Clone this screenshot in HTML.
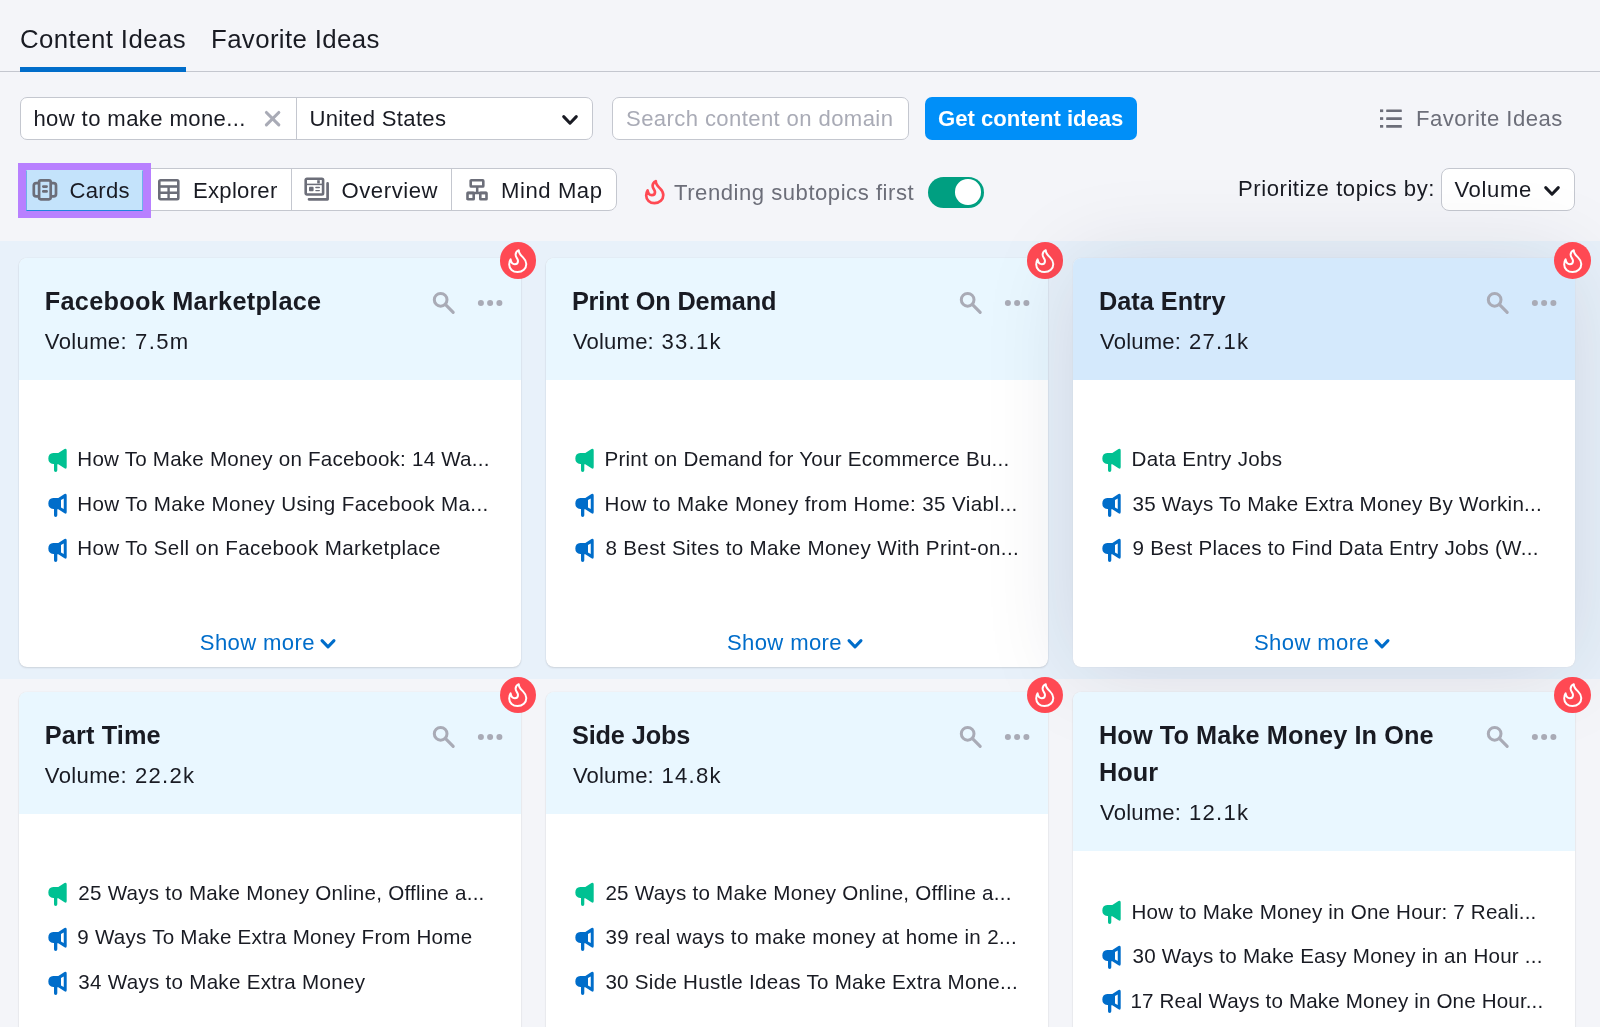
<!DOCTYPE html>
<html lang="en">
<head>
<meta charset="utf-8">
<title>Content Ideas</title>
<style>
*{box-sizing:border-box;margin:0;padding:0}
html,body{width:1600px;height:1027px;overflow:hidden}
body{background:#f4f5f9;font-family:"Liberation Sans",Arial,sans-serif;color:#191b23;position:relative;will-change:transform}
.abs{position:absolute}
.t{position:absolute;white-space:nowrap;line-height:1}
/* tabs */
.tab{top:27px;color:#191b23}
.tabline{position:absolute;left:0;top:71px;width:1600px;height:1px;background:#c4c7cf}
.tabactive{position:absolute;left:20px;top:67px;width:166px;height:5px;background:#006dca}
/* inputs */
.box{position:absolute;background:#fff;border:1px solid #c4c7cf;border-radius:7px}
.btn{position:absolute;left:925px;top:97px;width:212px;height:43px;background:#008ff8;border-radius:7px}
/* cards */
.band{position:absolute;left:0;top:241.2px;width:1600px;height:438px;background:#e8f1fa}
.card{position:absolute;width:502.4px;background:#fff;border-radius:8px;box-shadow:0 0 1px rgba(25,27,35,.16),0 1px 2px rgba(25,27,35,.12)}
.card .hd{position:absolute;left:0;top:0;width:100%;background:#e9f7ff;border-radius:8px 8px 0 0}
.card.hover{box-shadow:0 0 1px rgba(25,27,35,.16),0 4px 90px rgba(20,35,60,.125)}
.card.hover .hd{background:#d4e9fc}
.title{font-weight:bold;left:26px;color:#191b23}
.vol{left:26px;color:#191b23}
.item{left:58.5px;color:#191b23}
.more{color:#006dca}
.tab{font-size:25.8px}
.title{font-size:25.3px}
.f14,.vol,.more{font-size:22.1px}
.item{font-size:20.6px}
#tb1{letter-spacing:0.417px;margin-left:0.00px;margin-top:0.00px}
#tb2{letter-spacing:0.385px;margin-left:0.00px;margin-top:0.00px}
#q{letter-spacing:0.389px;margin-left:0.00px;margin-top:0.00px}
#us{letter-spacing:0.333px;margin-left:0.00px;margin-top:0.00px}
#sd{letter-spacing:0.391px;margin-left:0.00px;margin-top:0.00px}
#gb{letter-spacing:0.000px;margin-left:0.00px;margin-top:0.00px}
#fi{letter-spacing:0.492px;margin-left:0.60px;margin-top:0.00px}
#v1{letter-spacing:0.250px;margin-left:0.00px;margin-top:0.00px}
#v2{letter-spacing:0.286px;margin-left:0.00px;margin-top:0.00px}
#v3{letter-spacing:0.571px;margin-left:0.00px;margin-top:0.00px}
#v4{letter-spacing:0.571px;margin-left:0.00px;margin-top:0.00px}
#tr{letter-spacing:0.522px;margin-left:1.00px;margin-top:0.00px}
#pr{letter-spacing:0.550px;margin-left:0.00px;margin-top:0.00px}
#vo{letter-spacing:0.600px;margin-left:0.00px;margin-top:0.00px}
#c0t0{letter-spacing:0.263px;margin-left:0.00px;margin-top:0.00px}
#c0v{letter-spacing:0.333px;margin-left:0.00px;margin-top:0.00px}
#c0n{letter-spacing:1.333px;margin-left:1.00px;margin-top:0.00px}
#c0i0{letter-spacing:0.211px;margin-left:0.00px;margin-top:0.00px}
#c0i1{letter-spacing:0.351px;margin-left:0.00px;margin-top:0.00px}
#c0i2{letter-spacing:0.353px;margin-left:0.00px;margin-top:0.00px}
#c0m{letter-spacing:0.375px;margin-left:0.00px;margin-top:0.00px}
#c1t0{letter-spacing:-0.143px;margin-left:0.00px;margin-top:0.00px}
#c1v{letter-spacing:0.167px;margin-left:1.00px;margin-top:0.00px}
#c1n{letter-spacing:1.250px;margin-left:0.40px;margin-top:0.00px}
#c1i0{letter-spacing:0.256px;margin-left:0.00px;margin-top:0.00px}
#c1i1{letter-spacing:0.385px;margin-left:0.00px;margin-top:0.00px}
#c1i2{letter-spacing:0.357px;margin-left:1.00px;margin-top:0.00px}
#c1m{letter-spacing:0.375px;margin-left:0.00px;margin-top:0.00px}
#c2t0{letter-spacing:0.000px;margin-left:0.00px;margin-top:0.00px}
#c2v{letter-spacing:0.167px;margin-left:1.00px;margin-top:0.00px}
#c2n{letter-spacing:1.250px;margin-left:0.80px;margin-top:0.00px}
#c2i0{letter-spacing:0.286px;margin-left:0.00px;margin-top:0.00px}
#c2i1{letter-spacing:0.231px;margin-left:1.00px;margin-top:0.00px}
#c2i2{letter-spacing:0.262px;margin-left:1.00px;margin-top:0.00px}
#c2m{letter-spacing:0.375px;margin-left:0.00px;margin-top:0.00px}
#c3t0{letter-spacing:0.125px;margin-left:0.00px;margin-top:0.00px}
#c3v{letter-spacing:0.333px;margin-left:0.00px;margin-top:0.00px}
#c3n{letter-spacing:1.250px;margin-left:1.00px;margin-top:0.00px}
#c3i0{letter-spacing:0.244px;margin-left:1.00px;margin-top:0.00px}
#c3i1{letter-spacing:0.229px;margin-left:0.00px;margin-top:0.00px}
#c3i2{letter-spacing:0.269px;margin-left:1.00px;margin-top:0.00px}
#c4t0{letter-spacing:-0.125px;margin-left:0.00px;margin-top:0.00px}
#c4v{letter-spacing:0.167px;margin-left:1.00px;margin-top:0.00px}
#c4n{letter-spacing:1.250px;margin-left:0.40px;margin-top:0.00px}
#c4i0{letter-spacing:0.244px;margin-left:1.00px;margin-top:0.00px}
#c4i1{letter-spacing:0.317px;margin-left:1.00px;margin-top:0.00px}
#c4i2{letter-spacing:0.268px;margin-left:1.00px;margin-top:0.00px}
#c5t0{letter-spacing:0.087px;margin-left:0.00px;margin-top:0.00px}
#c5t1{letter-spacing:0.000px;margin-left:0.00px;margin-top:0.00px}
#c5v{letter-spacing:0.167px;margin-left:1.00px;margin-top:0.00px}
#c5n{letter-spacing:1.250px;margin-left:0.80px;margin-top:0.00px}
#c5i0{letter-spacing:0.190px;margin-left:0.00px;margin-top:0.00px}
#c5i1{letter-spacing:0.225px;margin-left:1.00px;margin-top:0.00px}
#c5i2{letter-spacing:0.150px;margin-left:-1.00px;margin-top:0.00px}
.fire{position:absolute;width:36.6px;height:36.6px;border-radius:50%;background:#ff4953}
</style>
</head>
<body>
<!-- TABS -->
<div class="t tab" id="tb1" style="left:20px">Content Ideas</div>
<div class="t tab" id="tb2" style="left:211px">Favorite Ideas</div>
<div class="tabline"></div>
<div class="tabactive"></div>
<!-- SEARCH ROW -->
<div class="box" style="left:20px;top:97px;width:573px;height:43px"></div>
<div class="abs" style="left:296px;top:98px;width:1px;height:41px;background:#c4c7cf"></div>
<div class="t f14" id="q" style="left:33.4px;top:107.9px;">how to make mone...</div>
<svg class="abs" style="left:264px;top:110px" width="18" height="18" viewBox="0 0 18 18"><path d="M2.4 2.5 L14.8 14.9 M14.8 2.5 L2.4 14.9" stroke="#a9abb6" stroke-width="3.1" stroke-linecap="round" fill="none"/></svg>
<div class="t f14" id="us" style="left:309.4px;top:107.9px;">United States</div>
<svg class="abs" style="left:561px;top:113px" width="18" height="13" viewBox="0 0 18 13"><path d="M2.7 3.6 L9 10.2 L15.3 3.6" stroke="#191b23" stroke-width="3" fill="none" stroke-linecap="round" stroke-linejoin="round"/></svg>
<div class="box" style="left:612px;top:97px;width:297px;height:43px"></div>
<div class="t f14" id="sd" style="left:626px;top:107.9px;color:#a9abb6">Search content on domain</div>
<div class="btn"></div>
<div class="t f14" id="gb" style="left:938px;top:107.9px;color:#fff;font-weight:bold">Get content ideas</div>
<svg class="abs" style="left:1379px;top:108px" width="24" height="22" viewBox="0 0 24 22"><g fill="#6c6e79"><rect x="1" y="1.4" width="3.2" height="2.7"/><rect x="1" y="9.2" width="3.2" height="2.7"/><rect x="1" y="17" width="3.2" height="2.7"/><rect x="7.2" y="1.4" width="15.6" height="2.7" rx=".5"/><rect x="7.2" y="9.2" width="15.6" height="2.7" rx=".5"/><rect x="7.2" y="17" width="15.6" height="2.7" rx=".5"/></g></svg>
<div class="t f14" id="fi" style="left:1415.4px;top:107.9px;color:#6c6e79">Favorite Ideas</div>
<!-- VIEW ROW -->
<div class="box" style="left:20px;top:168px;width:597px;height:43px;border-radius:8px"></div>
<div class="abs" style="left:18px;top:163px;width:133px;height:55px;background:#b880ff"></div>
<div class="abs" style="left:26px;top:170px;width:117px;height:41px;background:#c4e3fb;border:1px solid #6fb1ea;border-bottom-color:#1f83dc;border-top-color:#c4e3fb"></div>
<div class="abs" style="left:291px;top:169px;width:1px;height:41px;background:#c4c7cf"></div>
<div class="abs" style="left:451px;top:169px;width:1px;height:41px;background:#c4c7cf"></div>
<!-- cards icon -->
<svg class="abs" style="left:32px;top:178px" width="26" height="24" viewBox="0 0 26 24"><g fill="none" stroke="#6c6e79" stroke-width="2.7" stroke-linejoin="round"><rect x="7.1" y="2.3" width="11.6" height="19" rx="1.7"/><path d="M7 5.2 H4.2 Q1.8 5.2 1.8 7.6 V16 Q1.8 18.4 4.2 18.4 H7"/><path d="M18.8 5.2 H21.6 Q24 5.2 24 7.6 V16 Q24 18.4 21.6 18.4 H18.8"/><path d="M11.3 8.6 H14.6 M11.3 13.4 H14.6" stroke-linecap="round" stroke-width="2.7"/></g></svg>
<div class="t f14" id="v1" style="left:69.6px;top:179.75px;">Cards</div>
<!-- explorer icon -->
<svg class="abs" style="left:157px;top:178px" width="24" height="24" viewBox="0 0 24 24"><g fill="none" stroke="#6c6e79" stroke-width="2.6" stroke-linejoin="round"><rect x="2.3" y="2.3" width="19" height="19" rx="1.2"/><path d="M2.3 8.5 H21.3"/><path d="M2.3 14.7 H21.3 M11.6 8.5 V21.3" stroke-width="2.4"/></g></svg>
<div class="t f14" id="v2" style="left:193px;top:179.75px;">Explorer</div>
<!-- overview icon -->
<svg class="abs" style="left:304px;top:177px" width="26" height="25" viewBox="0 0 26 25"><g fill="none" stroke="#6c6e79"><rect x="1.7" y="1.7" width="17.4" height="15.8" rx="1.2" stroke-width="2.6"/><path d="M1.7 7.4 H19.1" stroke-width="1.5"/><path d="M5 22.3 H23.6 V6.4" stroke-width="2.7" stroke-linejoin="round" stroke-linecap="round"/><path d="M11.9 10.5 H15.3 M11.9 13.6 H15.3" stroke-width="1.4" stroke-linecap="round"/></g><rect x="5" y="9.8" width="4.6" height="4.4" rx=".9" fill="#6c6e79"/><rect x="13.2" y="3.2" width="2.6" height="3.2" fill="#6c6e79"/></svg>
<div class="t f14" id="v3" style="left:341.5px;top:179.75px;">Overview</div>
<!-- mindmap icon -->
<svg class="abs" style="left:465px;top:178px" width="24" height="24" viewBox="0 0 24 24"><g fill="none" stroke="#6c6e79" stroke-width="2.6" stroke-linejoin="round"><rect x="5.7" y="2.3" width="12.6" height="6.2" rx=".6"/><rect x="2.5" y="14.9" width="6.2" height="6.4" rx=".4"/><rect x="15.3" y="14.9" width="6.2" height="6.4" rx=".4"/><path d="M12.2 8.5 V14.9 M2.5 14.9 H21.5" stroke-width="2.5"/></g></svg>
<div class="t f14" id="v4" style="left:501px;top:179.75px;">Mind Map</div>
<!-- trending -->
<svg class="abs" style="left:643px;top:178px" width="24" height="28" viewBox="0 0 24 28"><path d="M12.8 3.2 C12.6 6.4 15.2 8.6 17 10.4 C19 12.4 20.3 14.4 20.3 17 C20.3 21.6 16.6 25.1 11.5 25.1 C6.8 25.1 3.2 21.8 3.2 17.4 C3.2 15.4 3.8 13.6 4.6 12.4 C5 15 6.4 17.2 8.8 17.2 C10.8 17.2 12 15.8 12 14 C12 11.6 9.6 10.6 9.6 7.8 C9.6 5.8 10.8 4.2 12.8 3.2 Z" fill="none" stroke="#ff4953" stroke-width="2.7" stroke-linejoin="round"/></svg>
<div class="t f14" id="tr" style="left:673px;top:181.8px;color:#6c6e79">Trending subtopics first</div>
<div class="abs" style="left:927.75px;top:176.75px;width:55.75px;height:31px;border-radius:16px;background:#009f81"></div>
<div class="abs" style="left:955.3px;top:179.4px;width:25.4px;height:25.4px;border-radius:50%;background:#fff"></div>
<div class="t f14" id="pr" style="left:1238px;top:177.5px;">Prioritize topics by:</div>
<div class="box" style="left:1441px;top:168px;width:134px;height:43px;border-radius:8px"></div>
<div class="t f14" id="vo" style="left:1454.5px;top:178.5px;">Volume</div>
<svg class="abs" style="left:1543.25px;top:184.4px" width="18" height="13" viewBox="0 0 18 13"><path d="M2.7 3.6 L9 10.2 L15.3 3.6" stroke="#191b23" stroke-width="3" fill="none" stroke-linecap="round" stroke-linejoin="round"/></svg>
<!-- CARDS -->
<div class="band"></div>
<!-- CARDS-BEGIN -->
<div class="card" style="left:18.8px;top:257.6px;height:409.3px">
<div class="hd" style="height:122px"></div>
<div class="t title" id="c0t0" style="top:31.3px">Facebook Marketplace</div>
<div class="t vol" id="c0v" style="top:73.2px">Volume:</div>
<div class="t vol" id="c0n" style="top:73.2px;left:115.25px">7.5m</div>
<svg class="abs" style="left:413px;top:33px" width="24" height="24" viewBox="0 0 24 24"><circle cx="8.65" cy="8.8" r="6.35" fill="none" stroke="#a9abb6" stroke-width="3"/><path d="M13.3 13.4 L21.2 21.4" stroke="#a9abb6" stroke-width="3.1" stroke-linecap="round"/></svg>
<svg class="abs" style="left:458px;top:41px" width="26" height="8" viewBox="0 0 26 8"><circle cx="3.9" cy="4" r="3" fill="#a9abb6"/><circle cx="13.1" cy="4" r="3" fill="#a9abb6"/><circle cx="22.4" cy="4" r="3" fill="#a9abb6"/></svg>
<svg class="abs" style="left:28px;top:190.4px" width="21" height="25" viewBox="0 0 21 25"><path fill="#00c192" d="M6.25 5.1 H11.3 L17.5 1.1 Q19.7 -0.1 19.7 2.4 V19 Q19.7 21.5 17.5 20.3 L11.3 16.2 H10.3 V22.25 A1.65 1.65 0 0 1 7 22.25 V15.95 H6.25 A5.45 5.45 0 0 1 6.25 5.1 Z"/></svg>
<div class="t item" id="c0i0" style="top:191.9px">How To Make Money on Facebook: 14 Wa...</div>
<svg class="abs" style="left:28px;top:235.2px" width="21" height="25" viewBox="0 0 21 25"><path fill="#006dca" fill-rule="evenodd" d="M6.25 5.1 H11.3 L17.5 1.1 Q19.7 -0.1 19.7 2.4 V19 Q19.7 21.5 17.5 20.3 L11.3 16.2 H10.3 V22.25 A1.65 1.65 0 0 1 7 22.25 V15.95 H6.25 A5.45 5.45 0 0 1 6.25 5.1 Z M14 7 L16.75 5.5 V15.9 L14 14.4 Z"/></svg>
<div class="t item" id="c0i1" style="top:236.3px">How To Make Money Using Facebook Ma...</div>
<svg class="abs" style="left:28px;top:280.1px" width="21" height="25" viewBox="0 0 21 25"><path fill="#006dca" fill-rule="evenodd" d="M6.25 5.1 H11.3 L17.5 1.1 Q19.7 -0.1 19.7 2.4 V19 Q19.7 21.5 17.5 20.3 L11.3 16.2 H10.3 V22.25 A1.65 1.65 0 0 1 7 22.25 V15.95 H6.25 A5.45 5.45 0 0 1 6.25 5.1 Z M14 7 L16.75 5.5 V15.9 L14 14.4 Z"/></svg>
<div class="t item" id="c0i2" style="top:280.9px">How To Sell on Facebook Marketplace</div>
<div class="t more" id="c0m" style="left:181px;top:374.4px">Show more</div>
<svg class="abs" style="left:299.8px;top:379.4px" width="18" height="13" viewBox="0 0 18 13"><path d="M3 3.6 L9 9.9 L15 3.6" stroke="#006dca" stroke-width="3" fill="none" stroke-linecap="round" stroke-linejoin="round"/></svg>
<div class="fire" style="left:480.95px;top:-15.2px"><svg class="abs" style="left:6.6px;top:4.1px" width="24" height="28" viewBox="0 0 24 28"><path d="M12.8 3.2 C12.6 6.4 15.2 8.6 17 10.4 C19 12.4 20.3 14.4 20.3 17 C20.3 21.6 16.6 25.1 11.5 25.1 C6.8 25.1 3.2 21.8 3.2 17.4 C3.2 15.4 3.8 13.6 4.6 12.4 C5 15 6.4 17.2 8.8 17.2 C10.8 17.2 12 15.8 12 14 C12 11.6 9.6 10.6 9.6 7.8 C9.6 5.8 10.8 4.2 12.8 3.2 Z" fill="none" stroke="#fff" stroke-width="2" stroke-linejoin="round"/></svg></div>
</div>
<div class="card" style="left:545.9px;top:257.6px;height:409.3px">
<div class="hd" style="height:122px"></div>
<div class="t title" id="c1t0" style="top:31.3px">Print On Demand</div>
<div class="t vol" id="c1v" style="top:73.2px">Volume:</div>
<div class="t vol" id="c1n" style="top:73.2px;left:115.25px">33.1k</div>
<svg class="abs" style="left:413px;top:33px" width="24" height="24" viewBox="0 0 24 24"><circle cx="8.65" cy="8.8" r="6.35" fill="none" stroke="#a9abb6" stroke-width="3"/><path d="M13.3 13.4 L21.2 21.4" stroke="#a9abb6" stroke-width="3.1" stroke-linecap="round"/></svg>
<svg class="abs" style="left:458px;top:41px" width="26" height="8" viewBox="0 0 26 8"><circle cx="3.9" cy="4" r="3" fill="#a9abb6"/><circle cx="13.1" cy="4" r="3" fill="#a9abb6"/><circle cx="22.4" cy="4" r="3" fill="#a9abb6"/></svg>
<svg class="abs" style="left:28px;top:190.4px" width="21" height="25" viewBox="0 0 21 25"><path fill="#00c192" d="M6.25 5.1 H11.3 L17.5 1.1 Q19.7 -0.1 19.7 2.4 V19 Q19.7 21.5 17.5 20.3 L11.3 16.2 H10.3 V22.25 A1.65 1.65 0 0 1 7 22.25 V15.95 H6.25 A5.45 5.45 0 0 1 6.25 5.1 Z"/></svg>
<div class="t item" id="c1i0" style="top:191.9px">Print on Demand for Your Ecommerce Bu...</div>
<svg class="abs" style="left:28px;top:235.2px" width="21" height="25" viewBox="0 0 21 25"><path fill="#006dca" fill-rule="evenodd" d="M6.25 5.1 H11.3 L17.5 1.1 Q19.7 -0.1 19.7 2.4 V19 Q19.7 21.5 17.5 20.3 L11.3 16.2 H10.3 V22.25 A1.65 1.65 0 0 1 7 22.25 V15.95 H6.25 A5.45 5.45 0 0 1 6.25 5.1 Z M14 7 L16.75 5.5 V15.9 L14 14.4 Z"/></svg>
<div class="t item" id="c1i1" style="top:236.3px">How to Make Money from Home: 35 Viabl...</div>
<svg class="abs" style="left:28px;top:280.1px" width="21" height="25" viewBox="0 0 21 25"><path fill="#006dca" fill-rule="evenodd" d="M6.25 5.1 H11.3 L17.5 1.1 Q19.7 -0.1 19.7 2.4 V19 Q19.7 21.5 17.5 20.3 L11.3 16.2 H10.3 V22.25 A1.65 1.65 0 0 1 7 22.25 V15.95 H6.25 A5.45 5.45 0 0 1 6.25 5.1 Z M14 7 L16.75 5.5 V15.9 L14 14.4 Z"/></svg>
<div class="t item" id="c1i2" style="top:280.9px">8 Best Sites to Make Money With Print-on...</div>
<div class="t more" id="c1m" style="left:181px;top:374.4px">Show more</div>
<svg class="abs" style="left:299.8px;top:379.4px" width="18" height="13" viewBox="0 0 18 13"><path d="M3 3.6 L9 9.9 L15 3.6" stroke="#006dca" stroke-width="3" fill="none" stroke-linecap="round" stroke-linejoin="round"/></svg>
<div class="fire" style="left:480.95px;top:-15.2px"><svg class="abs" style="left:6.6px;top:4.1px" width="24" height="28" viewBox="0 0 24 28"><path d="M12.8 3.2 C12.6 6.4 15.2 8.6 17 10.4 C19 12.4 20.3 14.4 20.3 17 C20.3 21.6 16.6 25.1 11.5 25.1 C6.8 25.1 3.2 21.8 3.2 17.4 C3.2 15.4 3.8 13.6 4.6 12.4 C5 15 6.4 17.2 8.8 17.2 C10.8 17.2 12 15.8 12 14 C12 11.6 9.6 10.6 9.6 7.8 C9.6 5.8 10.8 4.2 12.8 3.2 Z" fill="none" stroke="#fff" stroke-width="2" stroke-linejoin="round"/></svg></div>
</div>
<div class="card hover" style="left:1073px;top:257.6px;height:409.3px">
<div class="hd" style="height:122px"></div>
<div class="t title" id="c2t0" style="top:31.3px">Data Entry</div>
<div class="t vol" id="c2v" style="top:73.2px">Volume:</div>
<div class="t vol" id="c2n" style="top:73.2px;left:115.25px">27.1k</div>
<svg class="abs" style="left:413px;top:33px" width="24" height="24" viewBox="0 0 24 24"><circle cx="8.65" cy="8.8" r="6.35" fill="none" stroke="#a9abb6" stroke-width="3"/><path d="M13.3 13.4 L21.2 21.4" stroke="#a9abb6" stroke-width="3.1" stroke-linecap="round"/></svg>
<svg class="abs" style="left:458px;top:41px" width="26" height="8" viewBox="0 0 26 8"><circle cx="3.9" cy="4" r="3" fill="#a9abb6"/><circle cx="13.1" cy="4" r="3" fill="#a9abb6"/><circle cx="22.4" cy="4" r="3" fill="#a9abb6"/></svg>
<svg class="abs" style="left:28px;top:190.4px" width="21" height="25" viewBox="0 0 21 25"><path fill="#00c192" d="M6.25 5.1 H11.3 L17.5 1.1 Q19.7 -0.1 19.7 2.4 V19 Q19.7 21.5 17.5 20.3 L11.3 16.2 H10.3 V22.25 A1.65 1.65 0 0 1 7 22.25 V15.95 H6.25 A5.45 5.45 0 0 1 6.25 5.1 Z"/></svg>
<div class="t item" id="c2i0" style="top:191.9px">Data Entry Jobs</div>
<svg class="abs" style="left:28px;top:235.2px" width="21" height="25" viewBox="0 0 21 25"><path fill="#006dca" fill-rule="evenodd" d="M6.25 5.1 H11.3 L17.5 1.1 Q19.7 -0.1 19.7 2.4 V19 Q19.7 21.5 17.5 20.3 L11.3 16.2 H10.3 V22.25 A1.65 1.65 0 0 1 7 22.25 V15.95 H6.25 A5.45 5.45 0 0 1 6.25 5.1 Z M14 7 L16.75 5.5 V15.9 L14 14.4 Z"/></svg>
<div class="t item" id="c2i1" style="top:236.3px">35 Ways To Make Extra Money By Workin...</div>
<svg class="abs" style="left:28px;top:280.1px" width="21" height="25" viewBox="0 0 21 25"><path fill="#006dca" fill-rule="evenodd" d="M6.25 5.1 H11.3 L17.5 1.1 Q19.7 -0.1 19.7 2.4 V19 Q19.7 21.5 17.5 20.3 L11.3 16.2 H10.3 V22.25 A1.65 1.65 0 0 1 7 22.25 V15.95 H6.25 A5.45 5.45 0 0 1 6.25 5.1 Z M14 7 L16.75 5.5 V15.9 L14 14.4 Z"/></svg>
<div class="t item" id="c2i2" style="top:280.9px">9 Best Places to Find Data Entry Jobs (W...</div>
<div class="t more" id="c2m" style="left:181px;top:374.4px">Show more</div>
<svg class="abs" style="left:299.8px;top:379.4px" width="18" height="13" viewBox="0 0 18 13"><path d="M3 3.6 L9 9.9 L15 3.6" stroke="#006dca" stroke-width="3" fill="none" stroke-linecap="round" stroke-linejoin="round"/></svg>
<div class="fire" style="left:480.95px;top:-15.2px"><svg class="abs" style="left:6.6px;top:4.1px" width="24" height="28" viewBox="0 0 24 28"><path d="M12.8 3.2 C12.6 6.4 15.2 8.6 17 10.4 C19 12.4 20.3 14.4 20.3 17 C20.3 21.6 16.6 25.1 11.5 25.1 C6.8 25.1 3.2 21.8 3.2 17.4 C3.2 15.4 3.8 13.6 4.6 12.4 C5 15 6.4 17.2 8.8 17.2 C10.8 17.2 12 15.8 12 14 C12 11.6 9.6 10.6 9.6 7.8 C9.6 5.8 10.8 4.2 12.8 3.2 Z" fill="none" stroke="#fff" stroke-width="2" stroke-linejoin="round"/></svg></div>
</div>
<div class="card" style="left:18.8px;top:691.9px;height:400px">
<div class="hd" style="height:122px"></div>
<div class="t title" id="c3t0" style="top:31.3px">Part Time</div>
<div class="t vol" id="c3v" style="top:73.2px">Volume:</div>
<div class="t vol" id="c3n" style="top:73.2px;left:115.25px">22.2k</div>
<svg class="abs" style="left:413px;top:33px" width="24" height="24" viewBox="0 0 24 24"><circle cx="8.65" cy="8.8" r="6.35" fill="none" stroke="#a9abb6" stroke-width="3"/><path d="M13.3 13.4 L21.2 21.4" stroke="#a9abb6" stroke-width="3.1" stroke-linecap="round"/></svg>
<svg class="abs" style="left:458px;top:41px" width="26" height="8" viewBox="0 0 26 8"><circle cx="3.9" cy="4" r="3" fill="#a9abb6"/><circle cx="13.1" cy="4" r="3" fill="#a9abb6"/><circle cx="22.4" cy="4" r="3" fill="#a9abb6"/></svg>
<svg class="abs" style="left:28px;top:190.4px" width="21" height="25" viewBox="0 0 21 25"><path fill="#00c192" d="M6.25 5.1 H11.3 L17.5 1.1 Q19.7 -0.1 19.7 2.4 V19 Q19.7 21.5 17.5 20.3 L11.3 16.2 H10.3 V22.25 A1.65 1.65 0 0 1 7 22.25 V15.95 H6.25 A5.45 5.45 0 0 1 6.25 5.1 Z"/></svg>
<div class="t item" id="c3i0" style="top:191.3px">25 Ways to Make Money Online, Offline a...</div>
<svg class="abs" style="left:28px;top:234.9px" width="21" height="25" viewBox="0 0 21 25"><path fill="#006dca" fill-rule="evenodd" d="M6.25 5.1 H11.3 L17.5 1.1 Q19.7 -0.1 19.7 2.4 V19 Q19.7 21.5 17.5 20.3 L11.3 16.2 H10.3 V22.25 A1.65 1.65 0 0 1 7 22.25 V15.95 H6.25 A5.45 5.45 0 0 1 6.25 5.1 Z M14 7 L16.75 5.5 V15.9 L14 14.4 Z"/></svg>
<div class="t item" id="c3i1" style="top:235.5px">9 Ways To Make Extra Money From Home</div>
<svg class="abs" style="left:28px;top:279.3px" width="21" height="25" viewBox="0 0 21 25"><path fill="#006dca" fill-rule="evenodd" d="M6.25 5.1 H11.3 L17.5 1.1 Q19.7 -0.1 19.7 2.4 V19 Q19.7 21.5 17.5 20.3 L11.3 16.2 H10.3 V22.25 A1.65 1.65 0 0 1 7 22.25 V15.95 H6.25 A5.45 5.45 0 0 1 6.25 5.1 Z M14 7 L16.75 5.5 V15.9 L14 14.4 Z"/></svg>
<div class="t item" id="c3i2" style="top:280.1px">34 Ways to Make Extra Money</div>
<div class="fire" style="left:480.95px;top:-15.2px"><svg class="abs" style="left:6.6px;top:4.1px" width="24" height="28" viewBox="0 0 24 28"><path d="M12.8 3.2 C12.6 6.4 15.2 8.6 17 10.4 C19 12.4 20.3 14.4 20.3 17 C20.3 21.6 16.6 25.1 11.5 25.1 C6.8 25.1 3.2 21.8 3.2 17.4 C3.2 15.4 3.8 13.6 4.6 12.4 C5 15 6.4 17.2 8.8 17.2 C10.8 17.2 12 15.8 12 14 C12 11.6 9.6 10.6 9.6 7.8 C9.6 5.8 10.8 4.2 12.8 3.2 Z" fill="none" stroke="#fff" stroke-width="2" stroke-linejoin="round"/></svg></div>
</div>
<div class="card" style="left:545.9px;top:691.9px;height:400px">
<div class="hd" style="height:122px"></div>
<div class="t title" id="c4t0" style="top:31.3px">Side Jobs</div>
<div class="t vol" id="c4v" style="top:73.2px">Volume:</div>
<div class="t vol" id="c4n" style="top:73.2px;left:115.25px">14.8k</div>
<svg class="abs" style="left:413px;top:33px" width="24" height="24" viewBox="0 0 24 24"><circle cx="8.65" cy="8.8" r="6.35" fill="none" stroke="#a9abb6" stroke-width="3"/><path d="M13.3 13.4 L21.2 21.4" stroke="#a9abb6" stroke-width="3.1" stroke-linecap="round"/></svg>
<svg class="abs" style="left:458px;top:41px" width="26" height="8" viewBox="0 0 26 8"><circle cx="3.9" cy="4" r="3" fill="#a9abb6"/><circle cx="13.1" cy="4" r="3" fill="#a9abb6"/><circle cx="22.4" cy="4" r="3" fill="#a9abb6"/></svg>
<svg class="abs" style="left:28px;top:190.4px" width="21" height="25" viewBox="0 0 21 25"><path fill="#00c192" d="M6.25 5.1 H11.3 L17.5 1.1 Q19.7 -0.1 19.7 2.4 V19 Q19.7 21.5 17.5 20.3 L11.3 16.2 H10.3 V22.25 A1.65 1.65 0 0 1 7 22.25 V15.95 H6.25 A5.45 5.45 0 0 1 6.25 5.1 Z"/></svg>
<div class="t item" id="c4i0" style="top:191.3px">25 Ways to Make Money Online, Offline a...</div>
<svg class="abs" style="left:28px;top:234.9px" width="21" height="25" viewBox="0 0 21 25"><path fill="#006dca" fill-rule="evenodd" d="M6.25 5.1 H11.3 L17.5 1.1 Q19.7 -0.1 19.7 2.4 V19 Q19.7 21.5 17.5 20.3 L11.3 16.2 H10.3 V22.25 A1.65 1.65 0 0 1 7 22.25 V15.95 H6.25 A5.45 5.45 0 0 1 6.25 5.1 Z M14 7 L16.75 5.5 V15.9 L14 14.4 Z"/></svg>
<div class="t item" id="c4i1" style="top:235.5px">39 real ways to make money at home in 2...</div>
<svg class="abs" style="left:28px;top:279.3px" width="21" height="25" viewBox="0 0 21 25"><path fill="#006dca" fill-rule="evenodd" d="M6.25 5.1 H11.3 L17.5 1.1 Q19.7 -0.1 19.7 2.4 V19 Q19.7 21.5 17.5 20.3 L11.3 16.2 H10.3 V22.25 A1.65 1.65 0 0 1 7 22.25 V15.95 H6.25 A5.45 5.45 0 0 1 6.25 5.1 Z M14 7 L16.75 5.5 V15.9 L14 14.4 Z"/></svg>
<div class="t item" id="c4i2" style="top:280.1px">30 Side Hustle Ideas To Make Extra Mone...</div>
<div class="fire" style="left:480.95px;top:-15.2px"><svg class="abs" style="left:6.6px;top:4.1px" width="24" height="28" viewBox="0 0 24 28"><path d="M12.8 3.2 C12.6 6.4 15.2 8.6 17 10.4 C19 12.4 20.3 14.4 20.3 17 C20.3 21.6 16.6 25.1 11.5 25.1 C6.8 25.1 3.2 21.8 3.2 17.4 C3.2 15.4 3.8 13.6 4.6 12.4 C5 15 6.4 17.2 8.8 17.2 C10.8 17.2 12 15.8 12 14 C12 11.6 9.6 10.6 9.6 7.8 C9.6 5.8 10.8 4.2 12.8 3.2 Z" fill="none" stroke="#fff" stroke-width="2" stroke-linejoin="round"/></svg></div>
</div>
<div class="card" style="left:1073px;top:691.9px;height:400px">
<div class="hd" style="height:159px"></div>
<div class="t title" id="c5t0" style="top:31.3px">How To Make Money In One</div>
<div class="t title" id="c5t1" style="top:68.3px">Hour</div>
<div class="t vol" id="c5v" style="top:110.2px">Volume:</div>
<div class="t vol" id="c5n" style="top:110.2px;left:115.25px">12.1k</div>
<svg class="abs" style="left:413px;top:33px" width="24" height="24" viewBox="0 0 24 24"><circle cx="8.65" cy="8.8" r="6.35" fill="none" stroke="#a9abb6" stroke-width="3"/><path d="M13.3 13.4 L21.2 21.4" stroke="#a9abb6" stroke-width="3.1" stroke-linecap="round"/></svg>
<svg class="abs" style="left:458px;top:41px" width="26" height="8" viewBox="0 0 26 8"><circle cx="3.9" cy="4" r="3" fill="#a9abb6"/><circle cx="13.1" cy="4" r="3" fill="#a9abb6"/><circle cx="22.4" cy="4" r="3" fill="#a9abb6"/></svg>
<svg class="abs" style="left:28px;top:208.4px" width="21" height="25" viewBox="0 0 21 25"><path fill="#00c192" d="M6.25 5.1 H11.3 L17.5 1.1 Q19.7 -0.1 19.7 2.4 V19 Q19.7 21.5 17.5 20.3 L11.3 16.2 H10.3 V22.25 A1.65 1.65 0 0 1 7 22.25 V15.95 H6.25 A5.45 5.45 0 0 1 6.25 5.1 Z"/></svg>
<div class="t item" id="c5i0" style="top:210.0px">How to Make Money in One Hour: 7 Reali...</div>
<svg class="abs" style="left:28px;top:252.9px" width="21" height="25" viewBox="0 0 21 25"><path fill="#006dca" fill-rule="evenodd" d="M6.25 5.1 H11.3 L17.5 1.1 Q19.7 -0.1 19.7 2.4 V19 Q19.7 21.5 17.5 20.3 L11.3 16.2 H10.3 V22.25 A1.65 1.65 0 0 1 7 22.25 V15.95 H6.25 A5.45 5.45 0 0 1 6.25 5.1 Z M14 7 L16.75 5.5 V15.9 L14 14.4 Z"/></svg>
<div class="t item" id="c5i1" style="top:254.2px">30 Ways to Make Easy Money in an Hour ...</div>
<svg class="abs" style="left:28px;top:297.3px" width="21" height="25" viewBox="0 0 21 25"><path fill="#006dca" fill-rule="evenodd" d="M6.25 5.1 H11.3 L17.5 1.1 Q19.7 -0.1 19.7 2.4 V19 Q19.7 21.5 17.5 20.3 L11.3 16.2 H10.3 V22.25 A1.65 1.65 0 0 1 7 22.25 V15.95 H6.25 A5.45 5.45 0 0 1 6.25 5.1 Z M14 7 L16.75 5.5 V15.9 L14 14.4 Z"/></svg>
<div class="t item" id="c5i2" style="top:298.8px">17 Real Ways to Make Money in One Hour...</div>
<div class="fire" style="left:480.95px;top:-15.2px"><svg class="abs" style="left:6.6px;top:4.1px" width="24" height="28" viewBox="0 0 24 28"><path d="M12.8 3.2 C12.6 6.4 15.2 8.6 17 10.4 C19 12.4 20.3 14.4 20.3 17 C20.3 21.6 16.6 25.1 11.5 25.1 C6.8 25.1 3.2 21.8 3.2 17.4 C3.2 15.4 3.8 13.6 4.6 12.4 C5 15 6.4 17.2 8.8 17.2 C10.8 17.2 12 15.8 12 14 C12 11.6 9.6 10.6 9.6 7.8 C9.6 5.8 10.8 4.2 12.8 3.2 Z" fill="none" stroke="#fff" stroke-width="2" stroke-linejoin="round"/></svg></div>
</div>
<!-- CARDS-END -->
</body>
</html>
